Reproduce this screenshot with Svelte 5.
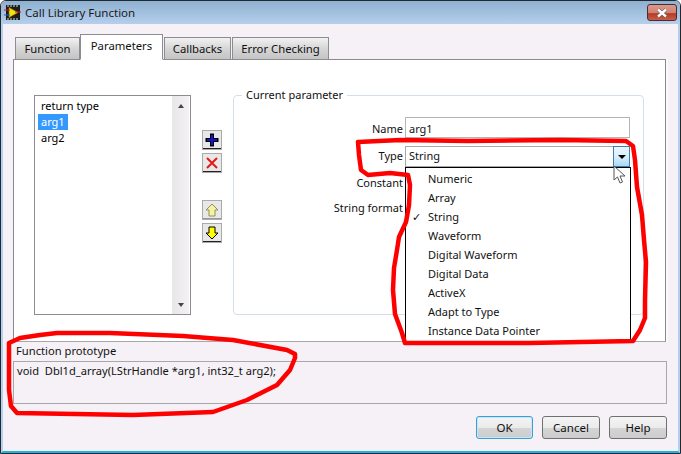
<script>
  const items = ['Numeric','Array','String','Waveform','Digital Waveform','Digital Data','ActiveX','Adapt to Type','Instance Data Pointer'];
  const tabs = [
    { label: 'Function', w: 65 },
    { label: 'Parameters', w: 83, active: true },
    { label: 'Callbacks', w: 67 },
    { label: 'Error Checking', w: 97 }
  ];
</script>

<div class="win">
  <header class="title">
    <svg class="logo" width="17" height="17" viewBox="0 0 17 17">
      <rect x="2" y="1" width="14" height="15" fill="#1c1c1c"/>
      <path d="M4 1v2M7 1v2M10 1v2M13 1v2M4 14v2M7 14v2M10 14v2M13 14v2" stroke="#ddd" stroke-width="1"/>
      <path d="M5 3.5 L14 8.5 L5 13.5 Z" fill="#f4e20c" stroke="#8a8200" stroke-width=".6"/>
      <path d="M0 6h6M11 8h6" stroke="#e11" stroke-width="1.2"/>
      <path d="M0 11h6" stroke="#16c" stroke-width="1.2"/>
    </svg>
    <span class="title-text">Call Library Function</span>
    <button class="close" aria-label="Close">
      <svg width="12" height="10" viewBox="0 0 12 10"><path d="M2 1.5 L10 8.5 M10 1.5 L2 8.5" stroke="#5a4a4a" stroke-width="3.6"/><path d="M2 1.5 L10 8.5 M10 1.5 L2 8.5" stroke="#fff" stroke-width="2.4"/></svg>
    </button>
  </header>

  <main class="main">
    <nav class="tabs">
      {#each tabs as t}
        <div class="tab" class:active={t.active} style="width:{t.w}px">{t.label}</div>
      {/each}
    </nav>

    <section class="panel">
      <div class="list">
        <div class="rows">
          <div class="row">return type</div>
          <div class="row"><span class="sel">arg1</span></div>
          <div class="row">arg2</div>
        </div>
        <div class="sb">
          <span class="up"></span>
          <span class="down"></span>
        </div>
      </div>

      <div class="tools">
        <div class="tool">
          <svg width="14" height="14" viewBox="0 0 14 14"><path d="M7 0.5v13M0.5 7h13" stroke="#000" stroke-width="4"/><path d="M7 2v10M2 7h10" stroke="#1414c8" stroke-width="2"/></svg>
        </div>
        <div class="tool">
          <svg width="14" height="14" viewBox="0 0 14 14"><path d="M2 2 L12 12 M12 2 L2 12" stroke="#e81818" stroke-width="2"/></svg>
        </div>
        <div class="tool gap dim">
          <svg width="14" height="14" viewBox="0 0 14 14"><path d="M7 1 L13 7 H10 V13 H4 V7 H1 Z" fill="#f6f39a" stroke="#8d8d70"/></svg>
        </div>
        <div class="tool">
          <svg width="14" height="14" viewBox="0 0 14 14"><path d="M7 13 L13 7 H10 V1 H4 V7 H1 Z" fill="#ffff00" stroke="#000"/></svg>
        </div>
      </div>

      <div class="group">
        <span class="legend">Current parameter</span>
        <div class="form">
          <label class="lbl l-name">Name</label><div class="field f-name">arg1</div>
          <label class="lbl l-type">Type</label>
          <div class="field f-type">String
            <span class="drop"><i></i></span>
            <div class="menu">
              {#each items as it}
                <div class="mi">{#if it === 'String'}<span class="chk">✓</span>{/if}{it}</div>
              {/each}
            </div>
          </div>
          <label class="lbl l-const">Constant</label><span></span>
          <label class="lbl l-fmt">String format</label><span></span>
        </div>
      </div>
    </section>

    <div class="proto-label">Function prototype</div>
    <div class="proto">void&nbsp; Dbl1d_array(LStrHandle *arg1, int32_t arg2);</div>

    <footer class="actions">
      <button class="btn ok">OK</button>
      <button class="btn cancel">Cancel</button>
      <button class="btn help">Help</button>
    </footer>
  </main>

  <svg class="ink" width="681" height="454" viewBox="0 0 681 454">
    <g fill="none" stroke="#f00" stroke-width="4.5" stroke-linejoin="round" stroke-linecap="round">
      <path d="M358 142 L400 140 L468 141 L560 140 L626 141 L633 146 L635 160 L637 187 L642 215 L644 240 L646 262 L645 300 L645 318 L640 330 L633 341 L530 343 L405 343 L402 333 L395 314 L393 290 L394 268 L397 250 L399 237 L406 222 L409 205 L410 185 L408 175 L390 173 L368 175 L361 170 L359 155 Z"/>
      <path d="M9 343 L20 338 L40 335 L57 333 L110 333 L183 336 L233 340 L287 350 L295 354 L295 358 L290 370 L277 385 L247 400 L213 412 L133 415 L17 413 L11 406 L9 390 Z"/>
    </g>
  </svg>

  <svg class="cursor" width="13" height="20" viewBox="0 0 13 20">
    <path d="M1 1 L1 15 L4.5 12 L7 18 L9.5 17 L7 11 L12 11 Z" fill="#fff" stroke="#555" stroke-width="1"/>
  </svg>
</div>

<style>
  :global(body) { margin: 0; }
  .win {
    position: relative;
    width: 681px;
    height: 454px;
    box-sizing: border-box;
    display: flex;
    flex-direction: column;
    overflow: hidden;
    background: #f5f1f6;
    border: 1px solid #1e2a30;
    border-radius: 6px 6px 0 0;
    font-family: "Noto Sans", sans-serif;
    font-size: 11px;
    color: #111;
  }
  .title {
    flex: none;
    height: 23px;
    display: flex;
    align-items: center;
    padding: 0 3px 0 3px;
    background: linear-gradient(#8fb0d0, #b5cfec);
  }
  .logo { margin-right: 4px; }
  .title-text { font-size: 11.5px; color: #1a1a1a; }
  .close {
    margin-left: auto;
    width: 30px;
    height: 17px;
    padding: 0;
    display: flex;
    align-items: center;
    justify-content: center;
    border: 1px solid #4d2a30;
    border-radius: 3px;
    background: linear-gradient(#d99a8c 0, #cf8373 50%, #b83a26 58%, #c4604a 100%);
  }
  .main {
    flex: 1;
    display: flex;
    flex-direction: column;
    padding: 10px 11px 0 10px;
    border-left: 2px solid #b5cfec;
    border-right: 2px solid #b5cfec;
    border-bottom: 2px solid #1fb4d8;
    min-height: 0;
  }
  .tabs {
    display: flex;
    align-items: flex-end;
    height: 26px;
    padding-left: 2px;
    position: relative;
    z-index: 1;
    margin-bottom: -1px;
  }
  .tab {
    box-sizing: border-box;
    height: 23px;
    border: 1px solid #8a8d92;
    background: linear-gradient(#f2f2f2, #d6d6d6 50%, #c4c4c4);
    text-align: center;
    line-height: 21px;
    font-size: 11.3px;
  }
  .tab.active {
    height: 26px;
    background: #fff;
    border-bottom-color: #fff;
    line-height: 21px;
    margin-right: 1px;
  }
  .tab:nth-child(3) { margin-right: 1px; }
  .panel {
    box-sizing: border-box;
    width: 653px;
    height: 283px;
    flex: none;
    display: flex;
    align-items: flex-start;
    padding: 35px 0 0 20px;
    background: #fff;
    border: 1px solid #898b8f;
    border-bottom-color: #a8a8a8;
    box-shadow: 2px 0 0 #fbf9fc;
  }
  .list {
    box-sizing: border-box;
    width: 157px;
    height: 220px;
    flex: none;
    display: flex;
    border: 1px solid #8b8d93;
    background: #fff;
  }
  .rows { flex: 1; padding: 2px 0 0 3px; }
  .row { height: 16px; line-height: 16px; font-size: 11px; color: #000; padding-left: 3px; }
  .sel { display: inline-block; background: #3399ff; color: #fff; padding: 0 3px; margin-left: -3px; }
  .sb {
    width: 17px;
    margin-right: 1px;
    display: flex;
    flex-direction: column;
    justify-content: space-between;
    align-items: center;
    padding: 8px 0 7px;
    box-sizing: border-box;
    background: linear-gradient(90deg, #e8e6e8, #f3f1f3);
  }
  .up, .down { width: 0; height: 0; border-left: 3.5px solid transparent; border-right: 3.5px solid transparent; }
  .up { border-bottom: 4px solid #444; }
  .down { border-top: 4px solid #444; }
  .tools {
    flex: none;
    width: 20px;
    margin: 35px 11px 0 11px;
    display: flex;
    flex-direction: column;
    gap: 3px;
  }
  .tool {
    box-sizing: border-box;
    width: 20px;
    height: 20px;
    display: flex;
    align-items: center;
    justify-content: center;
    background: #e8e8e8;
    border: 1px solid #fff;
    border-right-color: #444;
    border-bottom: 2px solid #222;
    outline: 1px solid #aaa;
    outline-offset: -1px;
  }
  .tool.gap { margin-top: 24px; }
  .tool.dim { border-right-color: #aaa; border-bottom-color: #999; }
  .group {
    position: relative;
    box-sizing: border-box;
    width: 411px;
    height: 220px;
    flex: none;
    border: 1px solid #d5dfe9;
    border-radius: 4px;
    padding: 21px 13px 0 0;
  }
  .legend {
    position: absolute;
    left: 8px;
    top: -9px;
    padding: 0 4px;
    background: #fff;
    font-size: 11px;
    line-height: 16px;
  }
  .form {
    display: grid;
    grid-template-columns: 1fr 225px;
    grid-template-rows: 21px 21px 21px 21px;
    row-gap: 8px;
    column-gap: 2px;
    align-items: center;
  }
  .lbl { text-align: right; font-size: 11px; }
  .l-name { margin-top: 2px; }
  .l-type { margin-top: -2px; }
  .l-const { margin-top: -7px; }
  .l-fmt { margin-top: -15px; }
  .field {
    box-sizing: border-box;
    height: 21px;
    line-height: 21px;
    padding-left: 3px;
    font-size: 11px;
    border: 1px solid #b5b5b5;
    position: relative;
  }
  .f-type { border-color: #a8a8a8; line-height: 17px; }
  .drop {
    position: absolute;
    right: -1px;
    top: -1px;
    width: 17px;
    height: 21px;
    box-sizing: border-box;
    border: 1px solid #3c7fb1;
    background: linear-gradient(#eaf6fd, #d9f0fc 50%, #a7d9f5);
    display: flex;
    align-items: center;
    justify-content: center;
  }
  .drop i { width: 0; height: 0; border-left: 4px solid transparent; border-right: 4px solid transparent; border-top: 4px solid #000; }
  .menu {
    position: absolute;
    left: -1px;
    top: 20px;
    width: 226px;
    height: 175px;
    box-sizing: border-box;
    padding-top: 1px;
    background: #fff;
    border: 1px solid #000;
    z-index: 2;
  }
  .mi { position: relative; height: 19px; line-height: 19px; padding-left: 22px; font-size: 11px; }
  .chk { position: absolute; left: 6px; font-size: 11px; }
  .proto-label { height: 19px; flex: none; line-height: 17px; font-size: 11.2px; padding: 0 0 0 3px; }
  .proto {
    box-sizing: border-box;
    flex: none;
    height: 43px;
    padding: 0 0 0 3px;
    line-height: 17px;
    font-size: 11.1px;
    border: 1px solid #a8a8a8;
    background: #f5f1f6;
  }
  .actions {
    flex: none;
    display: flex;
    justify-content: flex-end;
    gap: 9px;
    margin-top: 12px;
  }
  .btn {
    box-sizing: border-box;
    height: 23px;
    padding: 0;
    font-family: inherit;
    font-size: 11.5px;
    color: #111;
    border: 1px solid #707070;
    border-radius: 3px;
    background: linear-gradient(#f4f4f4, #ebebeb 50%, #d4d4d4 55%, #cdcdcd);
  }
  .ok { width: 57px; border-color: #3c9ed4; box-shadow: inset 0 0 0 1px #c4e8fa; }
  .cancel { width: 58px; }
  .help { width: 58px; }
  .ink { position: absolute; left: -1px; top: -1px; pointer-events: none; z-index: 5; }
  .cursor { position: absolute; left: 612px; top: 164px; z-index: 6; }
</style>
